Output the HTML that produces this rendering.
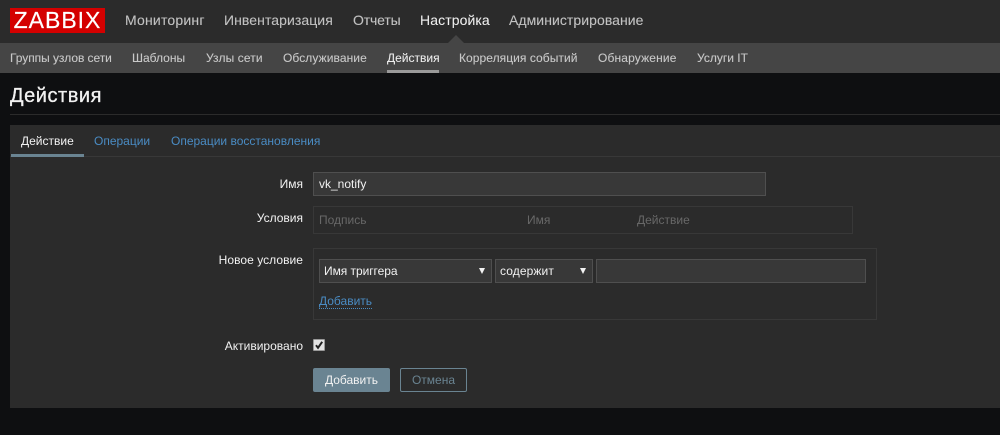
<!DOCTYPE html>
<html><head><meta charset="utf-8">
<style>
html,body{margin:0;padding:0;width:1000px;height:435px;overflow:hidden;background:#0e0f11;}
body{position:relative;font-family:"Liberation Sans",Arial,sans-serif;font-size:12px;color:#f2f2f2;}
.a{position:absolute;white-space:nowrap;}
.t{line-height:14px;}
.m{font-size:14px;line-height:16px;top:12px;color:#c2c2c2;-webkit-text-stroke:.1px #c2c2c2;}
.s{font-size:12px;line-height:14px;top:51px;color:#c8c8c8;-webkit-text-stroke:.1px #c8c8c8;}
.l{color:#f2f2f2;text-align:right;right:697px;}
.tab{top:134px;color:#4a8cc4;line-height:14px;}
.in{background:#383838;border:1px solid #4f4f4f;box-sizing:border-box;}
.ph{color:#686868;top:213px;line-height:14px;}
.tri{width:0;height:0;border-left:3.5px solid transparent;border-right:3.5px solid transparent;border-top:6px solid #f2f2f2;}
</style></head><body>
<div class="a" style="left:0;top:0;width:1000px;height:43px;background:#2b2b2b"></div>
<div class="a" style="left:0;top:43px;width:1000px;height:30px;background:#454545"></div>
<div class="a" style="left:10px;top:8px;width:95px;height:25px;background:#d40000"></div>
<div class="a" style="left:10px;top:8px;width:95px;height:25px;line-height:25px;text-align:center;color:#fff;font-size:23px;letter-spacing:1px;-webkit-text-stroke:.2px #fff">ZABBIX</div>
<div class="a m" style="left:125px;letter-spacing:.2px">Мониторинг</div>
<div class="a m" style="left:224px;letter-spacing:.07px">Инвентаризация</div>
<div class="a m" style="left:353px;letter-spacing:-.15px">Отчеты</div>
<div class="a m" style="left:420px;color:#f2f2f2;letter-spacing:.1px">Настройка</div>
<div class="a m" style="left:509px;letter-spacing:.06px">Администрирование</div>
<div class="a" style="left:448px;top:35px;width:0;height:0;border-left:8px solid transparent;border-right:8px solid transparent;border-bottom:8px solid #454545"></div>
<div class="a s" style="left:10px;letter-spacing:-.05px">Группы узлов сети</div>
<div class="a s" style="left:132px">Шаблоны</div>
<div class="a s" style="left:206px;letter-spacing:.1px">Узлы сети</div>
<div class="a s" style="left:283px;letter-spacing:.08px">Обслуживание</div>
<div class="a s" style="left:387px;color:#f2f2f2">Действия</div>
<div class="a" style="left:387px;top:70px;width:52px;height:3px;background:#9a9a9a"></div>
<div class="a s" style="left:459px;letter-spacing:.06px">Корреляция событий</div>
<div class="a s" style="left:598px;letter-spacing:.15px">Обнаружение</div>
<div class="a s" style="left:697px">Услуги IT</div>
<div class="a" style="left:10px;top:85px;font-size:20px;line-height:23px;color:#f2f2f2;letter-spacing:.55px;-webkit-text-stroke:.3px #f2f2f2">Действия</div>
<div class="a" style="left:10px;top:114px;width:990px;height:1px;background:#2b2b2b"></div>
<div class="a" style="left:10px;top:125px;width:990px;height:283px;background:#2b2b2b"></div>
<div class="a" style="left:10px;top:156px;width:990px;height:1px;background:#383838"></div>
<div class="a" style="left:11px;top:154px;width:73px;height:3px;background:#6a8492"></div>
<div class="a tab" style="left:21px;color:#f2f2f2">Действие</div>
<div class="a tab" style="left:94px">Операции</div>
<div class="a tab" style="left:171px">Операции восстановления</div>
<div class="a t l" style="top:177px">Имя</div>
<div class="a in" style="left:313px;top:172px;width:453px;height:24px"></div>
<div class="a t" style="left:319px;top:177px">vk_notify</div>
<div class="a t l" style="top:211px">Условия</div>
<div class="a" style="left:313px;top:206px;width:540px;height:28px;box-sizing:border-box;border:1px solid #383838"></div>
<div class="a ph" style="left:319px">Подпись</div>
<div class="a ph" style="left:527px">Имя</div>
<div class="a ph" style="left:637px">Действие</div>
<div class="a t l" style="top:253px;letter-spacing:.05px">Новое условие</div>
<div class="a" style="left:313px;top:248px;width:564px;height:72px;box-sizing:border-box;border:1px solid #383838"></div>
<div class="a in" style="left:319px;top:259px;width:173px;height:24px"></div>
<div class="a t" style="left:324px;top:264px;letter-spacing:-.05px">Имя триггера</div>
<div class="a tri" style="left:479px;top:268px"></div>
<div class="a in" style="left:495px;top:259px;width:98px;height:24px"></div>
<div class="a t" style="left:500px;top:264px;letter-spacing:.1px">содержит</div>
<div class="a tri" style="left:580px;top:268px"></div>
<div class="a in" style="left:596px;top:259px;width:270px;height:24px"></div>
<div class="a t" style="left:319px;top:294px;color:#4a8cc4;border-bottom:1px dotted #4a8cc4;height:14px">Добавить</div>
<div class="a t l" style="top:339px">Активировано</div>
<div class="a" style="left:313px;top:339px;width:12px;height:12px;background:#e2e2e2;border-radius:1px;box-sizing:border-box;border:1px solid #9a9a9a"></div>
<svg class="a" style="left:313px;top:339px" width="12" height="12" viewBox="0 0 12 12"><path d="M3 6.2L5 8.8L9.2 2.8" fill="none" stroke="#222" stroke-width="2"/></svg>
<div class="a" style="left:313px;top:368px;width:77px;height:24px;background:#6a8492;border-radius:2px;color:#f2f2f2;text-align:center;line-height:24px">Добавить</div>
<div class="a" style="left:400px;top:368px;width:67px;height:24px;box-sizing:border-box;border:1px solid #6a8492;border-radius:2px;color:#6a8492;text-align:center;line-height:22px">Отмена</div>
</body></html>
